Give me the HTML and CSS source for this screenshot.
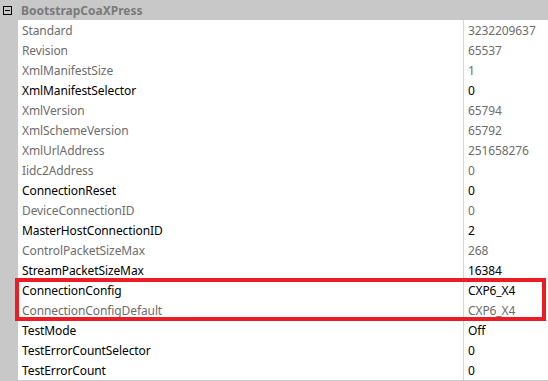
FILE: index.html
```html
<!DOCTYPE html>
<html>
<head>
    <title>Feature Browser</title>
    <link rel="stylesheet" href="styles.css">
</head>
<body>
    <div class="grid">
        <!-- Category header -->
        <div class="cat">
            <span class="toggle"></span>
            <span class="cat-name">BootstrapCoaXPress</span>
        </div>

        <div class="row ro"><div class="name">Standard</div><div class="val">3232209637</div></div>
        <div class="row ro"><div class="name">Revision</div><div class="val">65537</div></div>
        <div class="row ro"><div class="name">XmlManifestSize</div><div class="val">1</div></div>
        <div class="row"><div class="name">XmlManifestSelector</div><div class="val">0</div></div>
        <div class="row ro"><div class="name">XmlVersion</div><div class="val">65794</div></div>
        <div class="row ro"><div class="name">XmlSchemeVersion</div><div class="val">65792</div></div>
        <div class="row ro"><div class="name">XmlUrlAddress</div><div class="val">251658276</div></div>
        <div class="row ro"><div class="name">Iidc2Address</div><div class="val">0</div></div>
        <div class="row"><div class="name">ConnectionReset</div><div class="val">0</div></div>
        <div class="row ro"><div class="name">DeviceConnectionID</div><div class="val">0</div></div>
        <div class="row"><div class="name">MasterHostConnectionID</div><div class="val">2</div></div>
        <div class="row ro"><div class="name">ControlPacketSizeMax</div><div class="val">268</div></div>
        <div class="row"><div class="name">StreamPacketSizeMax</div><div class="val">16384</div></div>

        <!-- highlighted pair -->
        <div class="mark">
            <div class="row"><div class="name">ConnectionConfig</div><div class="val">CXP6_X4</div></div>
            <div class="row ro"><div class="name">ConnectionConfigDefault</div><div class="val">CXP6_X4</div></div>
        </div>

        <div class="row"><div class="name">TestMode</div><div class="val">Off</div></div>
        <div class="row"><div class="name">TestErrorCountSelector</div><div class="val">0</div></div>
        <div class="row"><div class="name">TestErrorCount</div><div class="val">0</div></div>
    </div>
</body>
</html>
```

FILE: styles.css
```css
body{
    margin:0;
    background:#c8c8c8;
    font-family:'Noto Sans', 'Open Sans', sans-serif;
    font-size:12px;
    color:#000;
}
.grid{
    width:548px;
}
.cat{
    height:20px;
    display:flex;
    align-items:center;
    background:#c8c8c8;
}
.toggle{
    width:7px;
    height:7px;
    border:1px solid #000;
    margin-left:3px;
    margin-right:9px;
    margin-top:1px;
    position:relative;
}
.toggle::after{
    content:"";
    position:absolute;
    left:1px;
    right:1px;
    top:3px;
    height:1px;
    background:#000;
}
.cat-name{
    font-weight:bold;
    color:#7a7a7a;
}
.row{
    display:grid;
    grid-template-columns:18px 1fr 84px;
    height:20px;
}
.row::before{
    content:"";
    background:#c8c8c8;
}
.name, .val{
    background:#fff;
    border-bottom:1px solid #d6d6d6;
    line-height:18px;
    padding-top:2px;
    box-sizing:border-box;
    white-space:nowrap;
    letter-spacing:-0.1px;
}
.name{
    padding-left:4px;
    border-right:1px solid #d6d6d6;
}
.val{
    padding-left:4px;
}
.ro .name, .ro .val{
    color:#6d6d6d;
}
.mark{
    position:relative;
}
.mark::after{
    content:"";
    position:absolute;
    top:-2px;
    bottom:-1px;
    left:15px;
    right:2px;
    border:4px solid #ed1c24;
    pointer-events:none;
}
```
